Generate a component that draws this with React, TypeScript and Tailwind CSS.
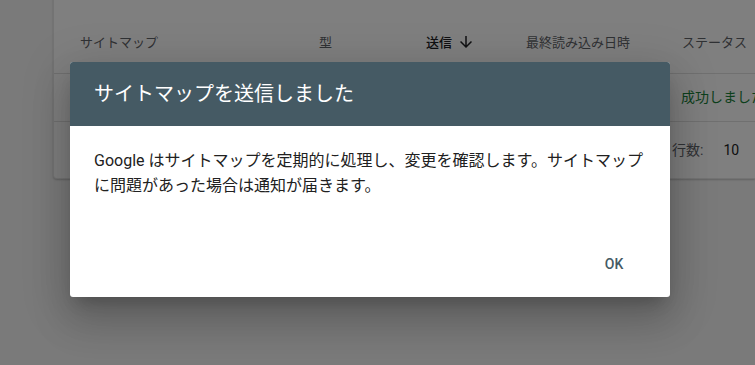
import React from 'react'

const font = { fontFamily: 'Roboto, "Noto Sans CJK JP", sans-serif' }

export default function App() {
  return (
    <div className="relative w-[755px] h-[365px] overflow-hidden bg-[#f4f4f4]" style={font}>
      {/* Sitemap table card */}
      <div className="ml-[53px] mt-[-20px] h-[199px] bg-white border-l border-b border-[#e6e6e6] rounded-bl-[4px] shadow-[0_1px_2px_rgba(0,0,0,0.2)]">
        <div className="h-[94px] flex items-end pb-[21px] text-[13px] text-[#5f6368] border-b border-[#e0e0e0]">
          <div className="w-[265px] pl-[26px]">サイトマップ</div>
          <div className="w-[107px]">型</div>
          <div className="w-[100px] flex items-center gap-[5px] text-[#202124] font-medium">
            送信
            <svg width="18" height="18" viewBox="0 0 24 24" fill="#202124">
              <path d="M20 12l-1.41-1.41L13 16.17V4h-2v12.17l-5.58-5.59L4 12l8 8 8-8z" />
            </svg>
          </div>
          <div className="w-[156px]">最終読み込み日時</div>
          <div className="whitespace-nowrap">ステータス</div>
        </div>
        <div className="h-[48px] flex items-center border-b border-[#e0e0e0] text-[14px]">
          <div className="ml-[627px] text-[#188038] whitespace-nowrap">成功しました</div>
        </div>
        <div className="h-[56px] flex items-center text-[14px] text-[#5f6368]">
          <div className="ml-[618px] whitespace-nowrap">行数:</div>
          <div className="ml-[20px] text-[#202124]">10</div>
        </div>
      </div>

      {/* Scrim */}
      <div className="absolute inset-0 bg-black/50" />

      {/* Dialog */}
      <div className="absolute left-[70px] top-[62px] w-[600px] h-[235px] flex flex-col bg-white rounded-[3px] overflow-hidden shadow-[0_11px_15px_-7px_rgba(0,0,0,0.2),0_24px_38px_3px_rgba(0,0,0,0.14),0_9px_46px_8px_rgba(0,0,0,0.12)]">
        <div className="h-[64px] flex items-center px-6 bg-[#455a64] text-white text-[20px]">
          サイトマップを送信しました
        </div>
        <div className="flex-1 px-6 pt-[22px] text-[16px] leading-[25px] text-[#212121] whitespace-nowrap">
          Google はサイトマップを定期的に処理し、変更を確認します。サイトマップ
          <br />
          に問題があった場合は通知が届きます。
        </div>
        <div className="flex justify-end pr-6 pb-[15px]">
          <button className="min-w-[64px] h-9 px-2 text-[14px] font-medium text-[#455a64] uppercase">
            OK
          </button>
        </div>
      </div>
    </div>
  )
}
